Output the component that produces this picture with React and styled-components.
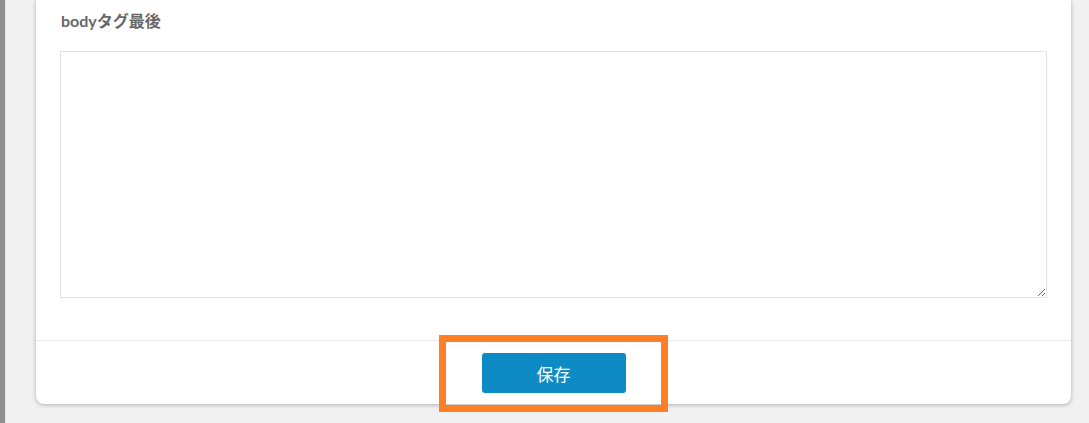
import React from 'react'
import styled, { createGlobalStyle } from 'styled-components'

const GlobalStyle = createGlobalStyle`
    html, body {
        margin: 0;
        padding: 0;
        background: #f1f1f1;
        font-family: Lato, "Noto Sans CJK JP", sans-serif;
    }
`

const Page = styled.div`
    display: flex;
    min-height: 423px;
    background: #f1f1f1;
`

const EdgeBar = styled.div`
    width: 5px;
    flex-shrink: 0;
    background: #8f8f8f;
    border-right: 1px solid #e6e6e6;
`

const Main = styled.main`
    flex: 1;
    padding: 0 18px 19px 30px;
`

const Card = styled.section`
    background: #fff;
    border-radius: 0 0 8px 8px;
    box-shadow: 0 1px 4px rgba(0, 0, 0, 0.28);
`

const CardBody = styled.div`
    padding: 10px 24px 42px 24px;
`

const Label = styled.label`
    display: block;
    font-size: 16px;
    line-height: 22px;
    font-weight: 700;
    color: #686868;
    margin: 0 0 19px 1px;
`

const TextArea = styled.textarea`
    display: block;
    box-sizing: border-box;
    width: 100%;
    height: 247px;
    margin: 0;
    border: 1px solid #e2e2e2;
    border-radius: 0;
    outline: none;
    font-family: inherit;
    font-size: 14px;
    resize: both;
`

const CardFooter = styled.div`
    display: flex;
    justify-content: center;
    border-top: 1px solid #e6e9ee;
    padding: 12px 0 11px;
`

const Highlight = styled.div`
    position: relative;
    display: inline-flex;
`

const HighlightFrame = styled.span`
    position: absolute;
    top: -18px;
    bottom: -19px;
    left: -43px;
    right: -42px;
    border: 7px solid #ff7f27;
    pointer-events: none;
`

const SaveButton = styled.button`
    width: 144px;
    height: 40px;
    border: none;
    border-radius: 3px;
    background: #0e8ac4;
    color: #fff;
    font-family: "Noto Sans CJK JP", sans-serif;
    font-size: 17px;
    cursor: pointer;
`

export default function App() {
    return (
        <>
            <GlobalStyle />
            <Page>
                <EdgeBar />
                <Main>
                    <Card>
                        <CardBody>
                            <Label htmlFor="body-end">bodyタグ最後</Label>
                            <TextArea id="body-end" />
                        </CardBody>
                        <CardFooter>
                            <Highlight>
                                <SaveButton>保存</SaveButton>
                                <HighlightFrame />
                            </Highlight>
                        </CardFooter>
                    </Card>
                </Main>
            </Page>
        </>
    )
}
